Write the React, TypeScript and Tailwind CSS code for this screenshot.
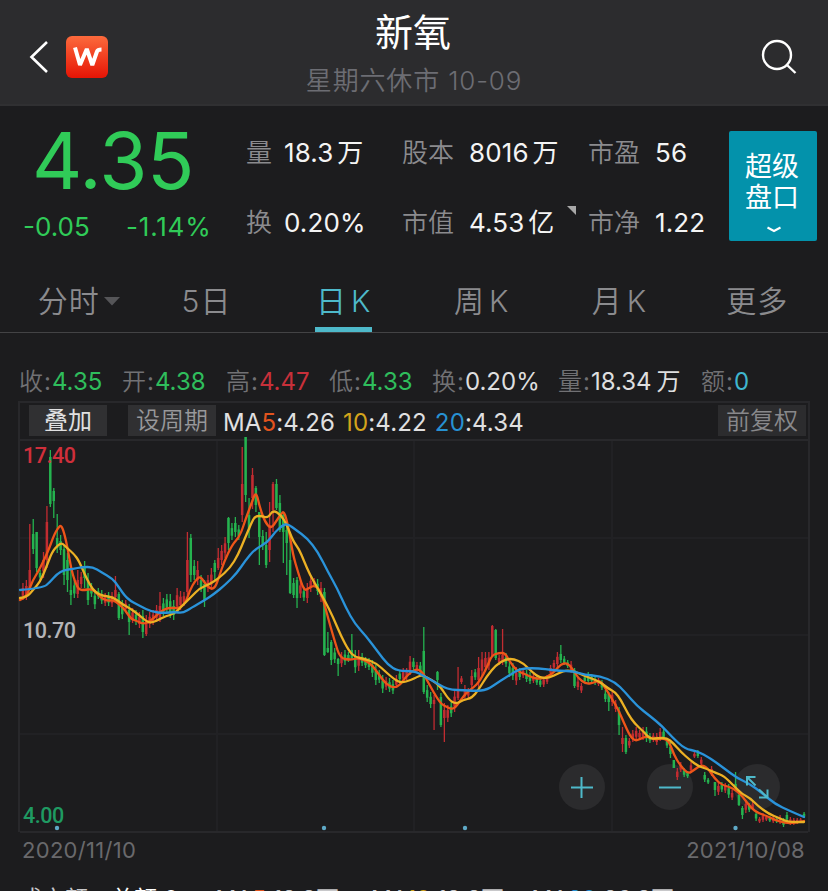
type Candle = [string, number, number, number?, number?];
type Point = [number, number];

const STEP = 3.426;
const FIRST_X = 22.9;

// [colour, high, low, bodyTop, bodyBottom]
const candles: Candle[] = [
  ["r", 583, 600], ["r", 580, 600], ["r", 524, 590, 570, 588], ["g", 519, 554, 534, 549], ["g", 532, 572, 532, 568],
  ["g", 570, 580], ["r", 552, 578], ["r", 506, 568, 522, 560], ["g", 450, 507, 457, 504], ["g", 488, 518, 491, 501],
  ["g", 514, 553, 538, 548], ["g", 535, 555], ["g", 545, 585, 549, 575], ["g", 553, 592, 560, 580], ["g", 570, 605, 590, 595],
  ["g", 580, 598], ["r", 570, 598, 580, 594], ["r", 572, 588], ["g", 561, 588, 566, 578], ["g", 573, 605, 580, 600],
  ["g", 583, 597], ["g", 590, 609], ["g", 588, 599], ["g", 590, 604], ["r", 593, 606],
  ["g", 592, 606], ["r", 592, 607], ["r", 576, 600, 590, 597], ["g", 592, 620, 594, 618], ["g", 600, 619],
  ["r", 600, 612], ["g", 604, 635, 610, 622], ["r", 608, 623], ["g", 610, 625], ["r", 612, 628],
  ["g", 610, 638, 616, 632], ["r", 615, 636, 620, 634], ["r", 612, 628], ["r", 610, 625], ["r", 605, 622],
  ["r", 592, 622, 606, 618], ["g", 598, 616], ["g", 594, 612], ["g", 594, 618], ["g", 600, 620],
  ["r", 588, 612], ["r", 591, 610], ["r", 592, 606], ["r", 532, 600, 560, 592], ["g", 534, 582, 538, 575],
  ["g", 560, 580], ["r", 561, 585, 570, 580], ["g", 575, 592], ["g", 580, 607, 584, 600], ["r", 575, 592],
  ["r", 568, 590], ["g", 560, 580, 563, 572], ["r", 548, 570, 558, 568], ["r", 545, 565], ["r", 537, 558],
  ["g", 517, 550, 518, 543], ["g", 523, 540], ["g", 517, 537], ["g", 525, 540], ["r", 447, 522, 484, 515],
  ["g", 437, 502, 437, 495], ["g", 498, 538, 515, 530], ["r", 468, 509, 475, 498], ["g", 486, 512, 488, 505], ["g", 512, 565, 512, 537],
  ["g", 530, 550], ["g", 532, 568, 545, 565], ["r", 502, 562, 525, 550], ["r", 482, 532, 484, 510], ["g", 479, 510, 484, 508],
  ["g", 495, 532, 503, 530], ["g", 513, 563, 515, 532], ["g", 525, 575, 530, 543], ["g", 540, 594, 560, 593], ["g", 578, 598, 583, 595],
  ["g", 577, 608, 580, 598], ["r", 580, 598], ["g", 587, 601], ["r", 583, 603], ["r", 576, 592],
  ["r", 578, 587], ["g", 579, 595], ["r", 582, 602], ["g", 588, 656, 592, 655], ["g", 632, 653, 648, 652],
  ["g", 640, 665, 642, 660], ["g", 648, 663], ["g", 658, 676, 659, 664], ["r", 652, 667], ["g", 650, 665],
  ["g", 652, 662], ["g", 634, 659, 650, 658], ["g", 650, 673], ["r", 650, 671], ["g", 653, 666],
  ["g", 657, 668], ["g", 658, 670], ["g", 660, 677], ["g", 665, 685], ["g", 670, 683],
  ["g", 675, 693], ["r", 677, 690], ["g", 678, 692], ["g", 680, 694], ["r", 675, 688],
  ["g", 670, 682], ["r", 668, 682], ["r", 668, 680], ["r", 656, 675], ["g", 658, 670],
  ["r", 662, 672], ["g", 662, 674], ["g", 627, 694, 651, 692], ["g", 685, 702], ["g", 692, 708],
  ["r", 695, 730, 700, 704], ["g", 671, 690, 672, 680], ["g", 693, 727, 697, 725], ["r", 703, 742, 710, 718], ["r", 705, 722],
  ["g", 702, 717], ["r", 690, 712], ["r", 667, 700, 690, 698], ["r", 676, 684], ["r", 685, 700],
  ["r", 688, 698], ["r", 670, 690], ["g", 669, 680], ["r", 657, 688, 668, 680], ["r", 652, 677],
  ["r", 652, 672], ["r", 652, 670], ["r", 625, 657, 626, 656], ["g", 629, 660, 630, 658], ["r", 655, 665],
  ["r", 629, 665, 655, 662], ["g", 653, 667], ["g", 662, 677], ["g", 663, 680], ["r", 667, 685],
  ["g", 668, 680], ["r", 668, 678], ["g", 670, 682], ["g", 672, 684], ["r", 674, 683],
  ["g", 675, 685], ["g", 678, 687], ["r", 677, 687], ["r", 675, 684], ["r", 665, 675],
  ["r", 660, 670], ["r", 652, 668], ["g", 645, 663, 654, 660], ["g", 656, 665], ["g", 660, 668],
  ["r", 661, 673], ["g", 668, 688, 670, 686], ["r", 678, 690], ["r", 683, 693], ["g", 675, 683],
  ["g", 672, 684], ["g", 674, 683], ["g", 677, 685], ["r", 678, 686], ["g", 680, 690],
  ["g", 690, 702], ["g", 692, 711, 694, 702], ["r", 690, 706], ["r", 700, 712], ["g", 707, 735, 711, 725],
  ["r", 727, 752, 738, 744], ["g", 735, 754, 738, 752], ["r", 738, 748], ["r", 730, 742], ["r", 727, 740],
  ["r", 730, 740], ["r", 727, 740], ["g", 727, 742], ["g", 733, 743], ["r", 733, 742],
  ["r", 733, 745], ["r", 728, 741], ["g", 728, 740], ["g", 738, 748], ["g", 742, 758],
  ["g", 760, 768, 760, 768], ["r", 768, 780], ["r", 762, 772], ["g", 768, 777], ["g", 771, 778],
  ["r", 762, 773], ["r", 752, 758], ["g", 750, 758], ["r", 757, 766], ["g", 772, 782],
  ["g", 778, 784], ["r", 766, 776], ["g", 782, 796, 782, 790], ["r", 782, 795], ["g", 782, 792],
  ["r", 783, 793], ["g", 784, 798], ["r", 790, 800], ["g", 772, 790, 784, 788], ["g", 793, 806, 795, 805],
  ["g", 806, 819, 808, 815], ["r", 800, 813], ["g", 803, 812], ["r", 802, 810], ["g", 811, 821],
  ["r", 817, 823], ["r", 813, 822], ["r", 815, 821], ["g", 816, 822], ["r", 816, 823],
  ["g", 817, 823], ["r", 815, 824], ["g", 818, 827], ["g", 812, 822], ["r", 817, 825],
  ["r", 818, 825], ["r", 818, 824], ["r", 818, 823], ["g", 812, 818],
];

const ma5: Point[] = [
  [20, 600], [26, 597], [29, 590], [33, 580], [38, 572], [44, 560], [49, 549], [54, 535], [58, 528], [61, 525],
  [64, 532], [68, 550], [71, 568], [75, 582], [79, 590], [85, 590], [91, 589], [96, 592], [100, 597], [107, 601],
  [113, 600], [119, 604], [125, 610], [131, 619], [137, 621], [143, 624], [149, 622], [155, 617], [160, 612], [167, 608],
  [173, 608], [180, 608], [186, 602], [190, 590], [195, 581], [200, 576], [205, 583], [210, 589], [215, 588], [219, 577],
  [224, 562], [232, 545], [240, 536], [246, 518], [252, 502], [256, 491], [260, 508], [265, 522], [271, 529], [277, 520],
  [281, 514], [284, 511], [288, 525], [293, 555], [298, 572], [304, 591], [309, 588], [315, 585], [321, 592], [326, 610],
  [330, 625], [335, 642], [340, 658], [350, 660], [358, 658], [366, 661], [372, 665], [380, 676], [386, 684], [394, 688],
  [400, 685], [405, 678], [412, 671], [418, 669], [423, 673], [428, 682], [434, 693], [441, 704], [447, 707], [451, 709],
  [455, 708], [460, 701], [467, 692], [473, 688], [480, 681], [487, 667], [492, 655], [499, 653], [505, 653], [510, 662],
  [517, 671], [525, 674], [533, 678], [541, 679], [549, 676], [555, 671], [561, 664], [567, 663], [572, 668], [578, 678],
  [586, 684], [593, 683], [600, 680], [606, 689], [612, 699], [618, 709], [624, 723], [630, 736], [635, 741], [640, 739],
  [647, 736], [655, 740], [662, 738], [669, 741], [674, 755], [680, 765], [688, 774], [694, 770], [701, 765], [707, 767],
  [715, 779], [722, 785], [730, 787], [737, 791], [743, 797], [751, 808], [758, 813], [767, 816], [775, 820], [785, 823],
  [795, 823], [804, 821],
];

const ma10: Point[] = [
  [20, 598], [27, 597], [33, 590], [40, 582], [46, 568], [52, 552], [58, 545], [62, 543], [67, 548], [74, 554],
  [79, 561], [85, 575], [90, 585], [95, 592], [103, 596], [113, 597], [122, 604], [131, 609], [139, 615], [146, 621],
  [151, 623], [158, 620], [166, 616], [174, 614], [182, 606], [191, 597], [200, 588], [210, 584], [219, 578], [230, 568],
  [238, 555], [245, 538], [251, 524], [255, 516], [262, 516], [268, 518], [273, 510], [281, 515], [287, 525], [293, 541],
  [299, 549], [304, 561], [310, 575], [317, 587], [325, 601], [333, 617], [341, 636], [349, 651], [355, 657], [365, 659],
  [376, 663], [387, 673], [394, 679], [401, 683], [411, 680], [417, 677], [422, 675], [432, 680], [440, 686], [449, 700],
  [456, 704], [463, 700], [472, 698], [479, 689], [487, 676], [496, 665], [506, 659], [514, 659], [523, 663], [532, 672],
  [540, 678], [549, 678], [559, 673], [567, 670], [576, 672], [585, 676], [593, 679], [600, 682], [609, 689], [615, 692],
  [621, 700], [628, 714], [635, 724], [643, 731], [650, 739], [658, 738], [667, 738], [673, 743], [681, 752], [690, 760],
  [698, 766], [707, 769], [716, 773], [724, 776], [734, 786], [742, 794], [750, 798], [758, 806], [769, 814], [779, 818],
  [788, 822], [804, 822],
];

const ma20: Point[] = [
  [20, 590], [43, 588], [50, 582], [57, 574], [64, 570], [73, 569], [82, 567], [93, 567], [101, 572], [113, 579],
  [118, 586], [127, 599], [140, 606], [152, 612], [164, 613], [174, 612], [183, 613], [191, 608], [205, 600], [214, 594],
  [225, 585], [237, 573], [245, 561], [255, 549], [267, 543], [275, 532], [283, 525], [288, 524], [296, 530], [307, 538],
  [318, 552], [328, 572], [337, 588], [346, 608], [355, 624], [366, 636], [378, 652], [388, 665], [398, 671], [414, 671],
  [422, 675], [433, 681], [443, 687], [452, 690], [463, 690], [475, 691], [487, 690], [500, 681], [510, 675], [519, 669],
  [532, 668], [545, 669], [560, 671], [573, 671], [585, 675], [600, 676], [615, 682], [625, 692], [637, 706], [650, 716],
  [662, 726], [672, 737], [685, 749], [697, 751], [710, 758], [725, 769], [737, 778], [750, 784], [762, 793], [775, 804],
  [790, 811], [804, 817],
];

// joins the points through their midpoints so the averages look smooth
const smooth = (pts: Point[]) => {
  let d = `M${pts[0][0]} ${pts[0][1]}`;
  for (let i = 1; i < pts.length - 1; i++) {
    const [x, y] = pts[i];
    const [nx, ny] = pts[i + 1];
    d += `Q${x} ${y} ${(x + nx) / 2} ${(y + ny) / 2}`;
  }
  const last = pts[pts.length - 1];
  return d + `L${last[0]} ${last[1]}`;
};

const Header = () => (
  <header className="h-[106px] bg-[#2c2c2e] border-b-2 border-[#303032] flex items-center justify-between pl-[29px] pr-[31px]">
    <div className="w-[120px] flex items-center gap-[17px] pt-[10px]">
      <svg width="20" height="34" viewBox="0 0 20 34" fill="none" stroke="#fff" strokeWidth="2.6">
        <path d="M18 2 2.5 17 18 32" />
      </svg>
      <svg width="42" height="42" viewBox="0 0 42 42">
        <defs>
          <linearGradient id="logo" x1="0" y1="0" x2="0" y2="1">
            <stop offset="0" stopColor="#fc6a3c" />
            <stop offset="1" stopColor="#e61405" />
          </linearGradient>
        </defs>
        <rect width="42" height="42" rx="6" fill="url(#logo)" />
        <path
          d="M9 11.5 14 29 20.8 13 26.300 29 31 15.500Q31.800 13.5 35.5 13.5"
          fill="none"
          stroke="#fff"
          strokeWidth="4"
          strokeLinejoin="bevel"
        />
      </svg>
    </div>
    <div className="flex flex-col items-center pt-[3px]">
      <h1 className="text-[38px] leading-[50px] text-white">新氧</h1>
      <p className="text-[26px] leading-[40px] pt-[4px] pl-[2px] tracking-[0.85px] font-[350] text-[#6c6d73] whitespace-nowrap">
        星期六休市 10-09
      </p>
    </div>
    <div className="w-[120px] flex justify-end pt-[9px]">
      <svg width="36" height="36" viewBox="0 0 36 36" fill="none" stroke="#fff" strokeWidth="2.4">
        <circle cx="16" cy="16" r="14" />
        <path d="M26 26 34.5 34" />
      </svg>
    </div>
  </header>
);

const Stat = ({ label, value, unit, mark }: { label: string; value: string; unit?: string; mark?: boolean }) => (
  <div className="relative flex items-center whitespace-nowrap">
    <span className="text-[#8b8b8e] font-[350]">{label}</span>
    <span className={`tracking-[0.1px] text-[#f4f4f4] ${label.length > 1 ? "ml-[15px]" : "ml-[12px]"}`}>{value}</span>
    {unit && <span className="ml-[4px] text-[#f4f4f4]">{unit}</span>}
    {mark && (
      <svg className="absolute left-[165px] top-[3px]" width="9" height="9" viewBox="0 0 9 9">
        <path d="M0 0H9V9Z" fill="#a8a8a8" />
      </svg>
    )}
  </div>
);

const Quote = () => (
  <section className="h-[162px] flex">
    <div className="w-[246px] pt-[17px] text-[#30cb58]">
      <p className="pl-[32px] text-[78px] leading-[76px] tracking-[-0.4px]">4.35</p>
      <div className="flex pl-[23px] pt-[11px] text-[26px] leading-[34px] whitespace-nowrap">
        <span className="w-[103px]">-0.05</span>
        <span className="tracking-[0.8px]">-1.14%</span>
      </div>
    </div>
    <div className="w-[483px] h-[140px] pt-[11px] grid grid-cols-[156px_186px_1fr] grid-rows-[70px_70px] items-center text-[26px]">
      <Stat label="量" value="18.3" unit="万" />
      <Stat label="股本" value="8016" unit="万" />
      <Stat label="市盈" value="56" />
      <Stat label="换" value="0.20%" />
      <Stat label="市值" value="4.53" unit="亿" mark />
      <Stat label="市净" value="1.22" />
    </div>
    <button className="w-[88px] h-[110px] mt-[25px] rounded-[2px] bg-[#0392ab] text-white text-[27px] leading-[31px] flex flex-col items-center pt-[20px] pr-[2px]">
      <span>超级</span>
      <span>盘口</span>
      <svg className="mt-[13px] ml-[3px]" width="16" height="7" viewBox="0 0 16 7" fill="none" stroke="#fff" strokeWidth="2">
        <path d="M1.5 1.5 8 5 14.5 1.5" />
      </svg>
    </button>
  </section>
);

const tabs = ["分时", "5日", "日K", "周K", "月K", "更多"];

const Tabs = () => (
  <nav className="h-[65px] pr-[2px] grid grid-cols-6 border-b border-[#434345] text-[30px] font-[350] text-[#8b8b8e]">
    {tabs.map((tab) => (
      <div key={tab} className="flex justify-center">
        {tab === "日K" ? (
          <span className="w-[57px] h-[64px] mr-[2px] flex justify-center items-center gap-[5px] text-[#4eb9ca] border-b-[5px] border-[#4eb9ca] pt-[7px]">
            <span>日</span>
            <span>K</span>
          </span>
        ) : (
          <span
            className={`h-[66px] flex items-center gap-[4px] tracking-[1px] whitespace-nowrap ${tab === "分时" ? "pl-[20px]" : ""}`}
          >
            {tab.endsWith("K") ? (
              <>
                <span>{tab[0]}</span>
                <span>K</span>
              </>
            ) : (
              tab
            )}
            {tab === "分时" && (
              <svg width="16" height="9" viewBox="0 0 16 9">
                <path d="M0 0H16L8 8.5Z" fill="#555558" />
              </svg>
            )}
          </span>
        )}
      </div>
    ))}
  </nav>
);

const prices = [
  { label: "收", value: "4.35", color: "text-[#2fbd5c]" },
  { label: "开", value: "4.38", color: "text-[#2fbd5c]" },
  { label: "高", value: "4.47", color: "text-[#c7303a]" },
  { label: "低", value: "4.33", color: "text-[#2fbd5c]" },
  { label: "换", value: "0.20%", color: "text-[#dededf]" },
  { label: "量", value: "18.34", unit: "万", color: "text-[#dededf]" },
  { label: "额", value: "0", color: "text-[#3fb6cf]" },
];

const Prices = () => (
  <div className="h-[69px] pt-[29px] pl-[19px] grid grid-cols-[103px_104px_103px_103px_126px_143px_1fr] text-[24px] leading-[40px] whitespace-nowrap">
    {prices.map((p) => (
      <div key={p.label}>
        <span className="font-[350] text-[#717174]">{p.label}</span>
        <span className="pl-px pr-px text-[#717174]">:</span>
        <span className={p.color}>{p.value}</span>
        {p.unit && <span className={`pl-[5px] ${p.color}`}>{p.unit}</span>}
      </div>
    ))}
  </div>
);

const Toolbar = () => (
  <div className="h-[36px] pt-[2px] pl-[9px] pr-[2px] flex items-start text-[24px] leading-[31px] text-[#e0e0e1] whitespace-nowrap">
    <button className="w-[78px] h-[31px] bg-[#303032]">叠加</button>
    <button className="w-[88px] h-[31px] ml-[21px] bg-[#303032] font-[350] text-[#98989b]">设周期</button>
    <p className="flex gap-[8px] pl-[7px] pt-[2px] tracking-[0.15px]">
      <span>
        MA<span className="text-[#e2541e]">5</span>:4.26
      </span>
      <span>
        <span className="text-[#d3a41c]">10</span>:4.22
      </span>
      <span>
        <span className="text-[#2791d2]">20</span>:4.34
      </span>
    </p>
    <button className="w-[88px] h-[31px] ml-auto bg-[#2c2c2e] font-[350] text-[#88888b]">前复权</button>
  </div>
);

const Chart = () => (
  <div className="relative h-[393px] font-medium text-[21.5px] leading-[24px]">
    <svg className="block overflow-visible" width="788" height="393" viewBox="20 439 788 393">
      <g stroke="#212124" strokeWidth="2">
        <path d="M20 538H808M80 635H808M20 734H808" />
        <path d="M217 439V832M414 439V832M612 439V832" />
        <path d="M20 440H808M20 832H808" stroke="#28282b" />
      </g>
      <g fill="#2b2b2d">
        <circle cx="582" cy="787" r="23" />
        <circle cx="670" cy="787" r="23" />
        <circle cx="757" cy="787" r="23" />
      </g>
      {candles.map(([color, high, low, top, bottom], i) => {
        const x = FIRST_X + i * STEP;
        const bodyTop = top ?? high + (low - high) * 0.3;
        const bodyBottom = bottom ?? low - (low - high) * 0.25;
        return (
          <g key={i} fill={color === "g" ? "#25b34f" : "#c22c31"}>
            <rect x={x - 0.6} y={high} width="1.3" height={low - high} />
            <rect x={x - 1.25} y={bodyTop} width="2.5" height={bodyBottom - bodyTop} />
          </g>
        );
      })}
      <g fill="none" strokeWidth="2.3" strokeLinecap="round">
        <path d={smooth(ma5)} stroke="#ee5519" />
        <path d={smooth(ma10)} stroke="#ecb124" />
        <path d={smooth(ma20)} stroke="#2a93da" />
      </g>
      <g fill="#5fa9c6">
        <circle cx="57" cy="828" r="2.2" />
        <circle cx="324" cy="828" r="2.2" />
        <circle cx="465" cy="828" r="2.2" />
        <circle cx="735.500" cy="828" r="2.2" />
      </g>
      <g stroke="#4eb9ca" strokeWidth="2" fill="none">
        <path d="M571 787.500H593M581.500 777V798" />
        <path d="M659 787.500H681" />
        <path d="M755.500 777H747V785.500M747 777 755.500 785.500M759 789.500 767.500 797.500M767.500 789.500V797.500H759" />
      </g>
    </svg>
    <span className="absolute left-[3px] top-[5px] font-['Roboto'] tracking-[-0.5px] text-[#cf2f3b]">17.40</span>
    <span className="absolute left-[3px] top-[180px] font-['Roboto'] tracking-[-0.5px] text-[#b4b4b7]">10.70</span>
    <span className="absolute left-[3px] top-[365px] font-['Roboto'] tracking-[-0.5px] text-[#1f9a62]">4.00</span>
  </div>
);

const App = () => {
  return (
    <div className="w-[828px] h-[891px] overflow-hidden bg-[#1c1c1e] font-['Inter','Noto_Sans_CJK_SC',sans-serif]">
      <Header />
      <Quote />
      <Tabs />
      <Prices />
      <div className="h-[431px] mt-[-1px] ml-[18px] w-[792px] border-x-2 border-t-2 border-[#28282b]">
        <Toolbar />
        <Chart />
      </div>
      <div className="h-[38px] mt-[-1px] pl-[22px] pr-[23px] flex justify-between text-[22px] leading-[38px] tracking-[0.3px] text-[#69696c]">
        <span>2020/11/10</span>
        <span>2021/10/08</span>
      </div>
      <div className="h-[30px] mt-[12px] pl-[19px] flex text-[23px] leading-[36px] text-[#c8c8ca] whitespace-nowrap">
        <span className="w-[92px]">成交额</span>
        <span className="w-[74px] text-white">总额:0</span>
        <span className="w-[154px] text-right">
          MA<span className="text-[#e2541e]">5</span>:18.3万
        </span>
        <span className="w-[165px] text-right">
          MA<span className="text-[#d3a41c]">10</span>:18.2万
        </span>
        <span className="w-[170px] text-right">
          MA<span className="text-[#2791d2]">20</span>:26.3万
        </span>
      </div>
    </div>
  );
};

export default App;
